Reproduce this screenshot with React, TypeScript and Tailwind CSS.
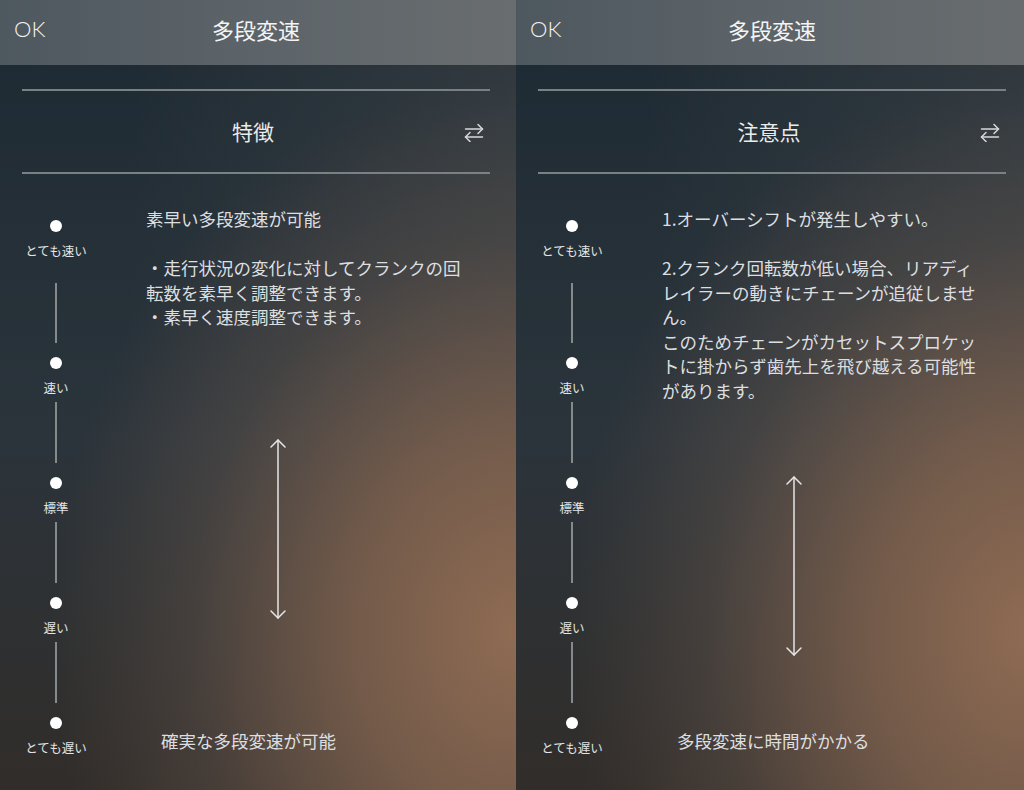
import React from "react";

type PanelProps = {
  title: string;
  lines: string[];
  bottom: string;
};

const jp = "font-['Noto_Sans_CJK_JP','Noto_Sans',sans-serif]";

const labels = ["とても速い", "速い", "標準", "遅い", "とても遅い"];

function SwapIcon() {
  return (
    <svg width="20" height="20" viewBox="0 0 20 20" fill="none" stroke="#d6d9db" strokeWidth="1.5" strokeLinecap="round" strokeLinejoin="round">
      <path d="M1.5 7H18.5" />
      <path d="M14 2.5L18.5 7L14 11.5" />
      <path d="M1.5 15H18.5" />
      <path d="M6 10.5L1.5 15L6 19.5" />
    </svg>
  );
}

function UpDownArrow() {
  return (
    <svg width="18" height="180" viewBox="0 0 18 180" fill="none" stroke="#e4e6e7" strokeWidth="1.5" strokeLinecap="round" strokeLinejoin="round">
      <path d="M9 1V179" />
      <path d="M2 8L9 1L16 8" />
      <path d="M2 172L9 179L16 172" />
    </svg>
  );
}

function Timeline() {
  return (
    <div className="ml-4 w-20 shrink-0 flex flex-col items-center pt-[46px]">
      {labels.map((label, i) => (
        <React.Fragment key={label}>
          {i > 0 && (
            <div className={`${i === 1 ? "mt-[24px] h-[60px]" : "mt-[6px] h-[61px]"} w-[2px] bg-[#858a8d]`} />
          )}
          <div className={`${i > 0 ? "mt-[14px]" : ""} h-3 w-3 rounded-full bg-white`} />
          <div className={`mt-[11px] h-4 leading-4 text-[12.5px] text-[#e2e4e5] whitespace-nowrap ${jp}`}>{label}</div>
        </React.Fragment>
      ))}
    </div>
  );
}

function Panel({ title, lines, bottom }: PanelProps) {
  return (
    <section className="w-[516px] h-[790px] shrink-0 flex flex-col bg-[radial-gradient(ellipse_90%_70%_at_100%_80%,rgba(143,107,83,1)_0%,rgba(130,99,78,0.8)_35%,rgba(110,90,78,0.32)_70%,transparent_100%),linear-gradient(90deg,transparent_25%,rgba(92,90,88,0.3)_100%),linear-gradient(180deg,#1d2a33_0%,#2b343b_55%,#312d2a_100%)]">
      {/* Header */}
      <header className="h-[65px] shrink-0 bg-[linear-gradient(90deg,#4e585f_0%,#5e656a_55%,#696d6f_100%)]">
        <div className="w-[512px] h-full grid grid-cols-[1fr_auto_1fr] items-center px-[14px] pb-[8px]">
          <span className="font-['Lato','Open_Sans',sans-serif] font-light text-[22px] text-[#f1f2f2] leading-none">OK</span>
          <h1 className={`text-[22px] text-[#f3f4f4] leading-none ${jp}`}>多段変速</h1>
          <span />
        </div>
      </header>

      <div className="w-[512px]">
        <div className="mt-[24px] ml-[22px] w-[468px] h-[2px] bg-[#7a8185]" />
        <div className="ml-[22px] w-[468px] h-[81px] grid grid-cols-[1fr_auto_1fr] items-center pr-[6px]">
          <span />
          <h2 className={`text-[21px] text-[#e9ebec] leading-none ${jp}`}>{title}</h2>
          <div className="justify-self-end flex">
            <SwapIcon />
          </div>
        </div>
        <div className="ml-[22px] w-[468px] h-[2px] bg-[#7a8185]" />
      </div>

      {/* Body */}
      <div className="flex-1 flex">
        <Timeline />
        <div className={`ml-[50px] flex-1 flex flex-col pt-[33px] pb-[37px] text-[17.5px] leading-[24.5px] text-[#dcdfe0] ${jp}`}>
          <div>
            {lines.map((line, i) => (
              <div key={i} className="h-[24.5px] whitespace-pre">
                {line}
              </div>
            ))}
          </div>
          <div className="flex-1 flex items-center">
            <div className="ml-[123px] flex">
              <UpDownArrow />
            </div>
          </div>
          <div className="ml-[15px] whitespace-nowrap">{bottom}</div>
        </div>
      </div>
    </section>
  );
}

export default function App() {
  return (
    <main className="w-[1024px] h-[790px] overflow-hidden flex bg-[#1d2a33]">
      <Panel
        title="特徴"
        lines={[
          "素早い多段変速が可能",
          "",
          "・走行状況の変化に対してクランクの回",
          "転数を素早く調整できます。",
          "・素早く速度調整できます。",
        ]}
        bottom="確実な多段変速が可能"
      />
      <Panel
        title="注意点"
        lines={[
          "1.オーバーシフトが発生しやすい。",
          "",
          "2.クランク回転数が低い場合、リアディ",
          "レイラーの動きにチェーンが追従しませ",
          "ん。",
          "このためチェーンがカセットスプロケッ",
          "トに掛からず歯先上を飛び越える可能性",
          "があります。",
        ]}
        bottom="多段変速に時間がかかる"
      />
    </main>
  );
}
